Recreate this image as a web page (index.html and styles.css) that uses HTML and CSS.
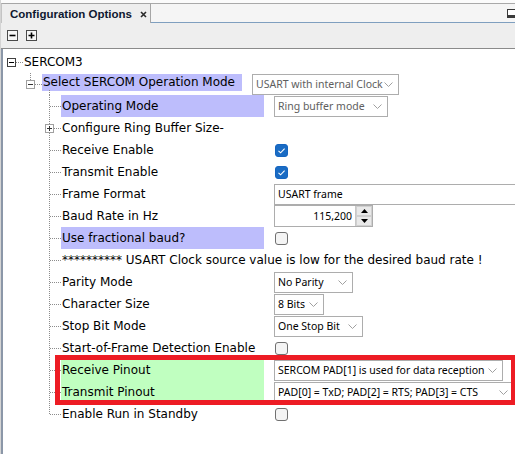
FILE: index.html
```html
<!DOCTYPE html>
<html>
<head>
<meta charset="utf-8">
<link rel="stylesheet" href="styles.css">
</head>
<body>
<div class="panel">
  <div class="tabbar">
    <div class="tab">
      <span class="tab-title">Configuration Options</span>
      <svg class="tab-close" width="7" height="7" viewBox="0 0 7 7"><path d="M1 1L6 6M6 1L1 6" stroke="#2a2a2a" stroke-width="1.6"/></svg>
    </div>
    <div class="tab-fill"><span class="min-btn"></span></div>
  </div>
  <div class="toolbar">
    <span class="tbtn"><svg width="9" height="9" viewBox="0 0 9 9"><path d="M1.5 4.5H7.5" stroke="#000" stroke-width="1.6"/></svg></span>
    <span class="tbtn"><svg width="9" height="9" viewBox="0 0 9 9"><path d="M1.5 4.5H7.5M4.5 1.5V7.5" stroke="#000" stroke-width="1.6"/></svg></span>
  </div>
  <div class="tree">
    <div class="row">
      <span class="gut g0"><span class="hl"></span><span class="exp exp-dark"><svg width="7" height="7" viewBox="0 0 7 7"><path d="M1 3.5H6" stroke="#000" stroke-width="1"/></svg></span></span>
      <span class="lbl">SERCOM3</span>
    </div>
    <div class="row r-sel">
      <span class="gut g1"><span class="vl"></span><span class="hl"></span><span class="exp"><svg width="7" height="7" viewBox="0 0 7 7"><path d="M1 3.5H6" stroke="#333" stroke-width="1"/></svg></span></span>
      <span class="lbl w1 hi-blue short">Select SERCOM Operation Mode</span>
      <span class="combo disabled cw147">USART with internal Clock<svg class="chev" width="9" height="5" viewBox="0 0 9 5"><polyline points="0.5,0.5 4.5,4.5 8.5,0.5" fill="none" stroke="#a0a0a0"/></svg></span>
    </div>
    <div class="row">
      <span class="gut g2"><span class="vl"></span><span class="hl"></span></span>
      <span class="lbl w2 hi-blue">Operating Mode</span>
      <span class="combo disabled cw114">Ring buffer mode<svg class="chev" width="9" height="5" viewBox="0 0 9 5"><polyline points="0.5,0.5 4.5,4.5 8.5,0.5" fill="none" stroke="#a0a0a0"/></svg></span>
    </div>
    <div class="row">
      <span class="gut g2"><span class="vl"></span><span class="hl hl-short"></span><span class="exp exp2"><svg width="7" height="7" viewBox="0 0 7 7"><path d="M1 3.5H6M3.5 1V6" stroke="#333" stroke-width="1"/></svg></span></span>
      <span class="lbl">Configure Ring Buffer Size-</span>
    </div>
    <div class="row">
      <span class="gut g2"><span class="vl"></span><span class="hl"></span></span>
      <span class="lbl w2">Receive Enable</span>
      <span class="chk on"><svg width="13" height="13" viewBox="0 0 13 13"><polyline points="3.5,6.8 5.6,8.8 9.6,4.6" fill="none" stroke="#fff" stroke-width="1.1"/></svg></span>
    </div>
    <div class="row">
      <span class="gut g2"><span class="vl"></span><span class="hl"></span></span>
      <span class="lbl w2">Transmit Enable</span>
      <span class="chk on"><svg width="13" height="13" viewBox="0 0 13 13"><polyline points="3.5,6.8 5.6,8.8 9.6,4.6" fill="none" stroke="#fff" stroke-width="1.1"/></svg></span>
    </div>
    <div class="row">
      <span class="gut g2"><span class="vl"></span><span class="hl"></span></span>
      <span class="lbl w2">Frame Format</span>
      <span class="field">USART frame</span>
    </div>
    <div class="row">
      <span class="gut g2"><span class="vl"></span><span class="hl"></span></span>
      <span class="lbl w2">Baud Rate in Hz</span>
      <span class="spinner"><span class="spin-val">115,200</span><span class="spin-btns"><span class="sbtn"><svg width="7" height="4" viewBox="0 0 7 4"><polygon points="0,4 7,4 3.5,0" fill="#000"/></svg></span><span class="sbtn"><svg width="7" height="4" viewBox="0 0 7 4"><polygon points="0,0 7,0 3.5,4" fill="#000"/></svg></span></span></span>
    </div>
    <div class="row">
      <span class="gut g2"><span class="vl"></span><span class="hl"></span></span>
      <span class="lbl w2 hi-blue">Use fractional baud?</span>
      <span class="chk"></span>
    </div>
    <div class="row">
      <span class="gut g2"><span class="vl"></span><span class="hl"></span></span>
      <span class="lbl">********** USART Clock source value is low for the desired baud rate !</span>
    </div>
    <div class="row">
      <span class="gut g2"><span class="vl"></span><span class="hl"></span></span>
      <span class="lbl w2">Parity Mode</span>
      <span class="combo cw79">No Parity<svg class="chev" width="9" height="5" viewBox="0 0 9 5"><polyline points="0.5,0.5 4.5,4.5 8.5,0.5" fill="none" stroke="#a0a0a0"/></svg></span>
    </div>
    <div class="row">
      <span class="gut g2"><span class="vl"></span><span class="hl"></span></span>
      <span class="lbl w2">Character Size</span>
      <span class="combo cw50">8 Bits<svg class="chev" width="9" height="5" viewBox="0 0 9 5"><polyline points="0.5,0.5 4.5,4.5 8.5,0.5" fill="none" stroke="#a0a0a0"/></svg></span>
    </div>
    <div class="row">
      <span class="gut g2"><span class="vl"></span><span class="hl"></span></span>
      <span class="lbl w2">Stop Bit Mode</span>
      <span class="combo cw89">One Stop Bit<svg class="chev" width="9" height="5" viewBox="0 0 9 5"><polyline points="0.5,0.5 4.5,4.5 8.5,0.5" fill="none" stroke="#a0a0a0"/></svg></span>
    </div>
    <div class="row">
      <span class="gut g2"><span class="vl"></span><span class="hl"></span></span>
      <span class="lbl w2">Start-of-Frame Detection Enable</span>
      <span class="chk"></span>
    </div>
    <div class="row">
      <span class="gut g2"><span class="vl"></span><span class="hl"></span></span>
      <span class="lbl w2 hi-green">Receive Pinout</span>
      <span class="combo cw229">SERCOM PAD[1] is used for data reception<svg class="chev" width="9" height="5" viewBox="0 0 9 5"><polyline points="0.5,0.5 4.5,4.5 8.5,0.5" fill="none" stroke="#a0a0a0"/></svg></span>
    </div>
    <div class="row">
      <span class="gut g2"><span class="vl"></span><span class="hl"></span></span>
      <span class="lbl w2 hi-green">Transmit Pinout</span>
      <span class="combo cw240">PAD[0] = TxD; PAD[2] = RTS; PAD[3] = CTS<svg class="chev" width="9" height="5" viewBox="0 0 9 5"><polyline points="0.5,0.5 4.5,4.5 8.5,0.5" fill="none" stroke="#a0a0a0"/></svg></span>
    </div>
    <div class="row">
      <span class="gut g2"><span class="vl vl-last"></span><span class="hl"></span></span>
      <span class="lbl w2">Enable Run in Standby</span>
      <span class="chk"></span>
    </div>
  </div>
  <div class="annot"></div>
</div>
</body>
</html>
```

FILE: styles.css
```css
* { box-sizing: border-box; }
html, body { margin: 0; padding: 0; background: #fff; }
body {
  width: 515px;
  height: 454px;
  overflow: hidden;
  font-family: "DejaVu Sans", sans-serif;
  font-size: 12px;
  color: #000;
}
.panel {
  position: relative;
  height: 454px;
  width: 515px;
  border-left: 1px solid #d4d4d4;
  display: flex;
  flex-direction: column;
  overflow: hidden;
}

/* tab bar */
.tabbar {
  flex: none;
  height: 23px;
  display: flex;
  align-items: flex-end;
  background: #fbfbfb;
}
.tab {
  flex: none;
  width: 150px;
  height: 20px;
  display: flex;
  align-items: center;
  padding-left: 8px;
  background: #eeeeee;
  border-top: 1px solid #a6a6a6;
  border-right: 1px solid #a6a6a6;
  border-left: 1px solid #c4c4c4;
}
.tab-title {
  font-family: "Liberation Sans", Arial, sans-serif;
  font-weight: bold;
  font-size: 11.5px;
  color: #0e1830;
}
.tab-close { margin-left: 8px; margin-top: 1px; }
.tab-fill {
  flex: 1;
  height: 20px;
  display: flex;
  align-items: center;
  justify-content: flex-end;
  background: #f5f5f5;
  border-top: 1px solid #a9a9a9;
  border-bottom: 1px solid #7f9fbf;
}
.min-btn {
  width: 9px;
  height: 9px;
  margin-right: -1px;
  border: 1px solid #3a3a3a;
  border-bottom: 3px solid #3a3a3a;
  background: #fff;
}

/* toolbar */
.toolbar {
  flex: none;
  height: 26px;
  display: flex;
  align-items: center;
  gap: 8px;
  padding-left: 6px;
  padding-bottom: 1px;
  background: #eeeeee;
  border-bottom: 1px solid #8a8a8a;
}
.tbtn {
  width: 11px;
  height: 11px;
  border: 1px solid #4a4a4a;
  background: #f6f6f6;
  display: flex;
  align-items: center;
  justify-content: center;
}
.tbtn svg { display: block; }

/* tree */
.tree {
  flex: 1;
  background: #fff;
  border-left: 2px solid #8b97a8;
  padding-top: 2px;
}
.row {
  position: relative;
  display: flex;
  align-items: center;
  height: 22px;
  white-space: nowrap;
}
.gut {
  position: relative;
  flex: none;
  align-self: stretch;
}
.g0 { width: 20px; }
.g1 { width: 39px; }
.g2 { width: 58px; }

.vl, .hl {
  position: absolute;
  display: block;
}
.vl {
  width: 1px;
  top: 0;
  bottom: 0;
  background: repeating-linear-gradient(to bottom, #8c8c8c 0 1px, transparent 1px 2px);
}
.hl {
  height: 1px;
  top: 11px;
  background: repeating-linear-gradient(to right, #8c8c8c 0 1px, transparent 1px 2px);
}
.g0 .hl { left: 13px; width: 7px; }
.g1 .vl { left: 27px; bottom: auto; height: 7px; }
.g1 .hl { left: 32px; width: 7px; }
.g2 .vl { left: 46px; }
.g2 .vl-last { bottom: auto; height: 12px; }
.g2 .hl { left: 47px; width: 11px; }
.g2 .hl-short { left: 51px; width: 7px; }

.exp {
  position: absolute;
  top: 7px;
  width: 9px;
  height: 9px;
  border: 1px solid #a0a0a0;
  background: #fff;
  display: flex;
  align-items: center;
  justify-content: center;
}
.exp svg { display: block; }
.exp-dark { left: 4px; border-color: #404040; }
.g1 .exp { left: 23px; }
.exp2 { left: 42px; }

.r-sel::after {
  content: "";
  position: absolute;
  left: 46px;
  top: 17px;
  width: 1px;
  height: 5px;
  background: repeating-linear-gradient(to bottom, #8c8c8c 0 1px, transparent 1px 2px);
}

.lbl {
  flex: none;
  padding-left: 1px;
  height: 22px;
  line-height: 22px;
}
.w1 { width: 200px; margin-right: 10px; }
.w2 { width: 203px; margin-right: 10px; }
.hi-blue { background: #bdbdfc; }
.hi-green { background: #c0ffc0; }
.short { height: 17px; line-height: 17px; align-self: flex-start; margin-top: 1px; }

/* value widgets */
.combo, .field, .spinner {
  font-family: "Noto Sans", "Liberation Sans", sans-serif;
  font-size: 10.5px;
}
.combo {
  flex: none;
  height: 21px;
  display: flex;
  align-items: center;
  justify-content: space-between;
  padding: 0 5px 0 3px;
  border: 1px solid #adadad;
  background: #fff;
  color: #000;
}
.combo.disabled { color: #5e5e5e; }
.chev { display: block; flex: none; }
.cw147 { width: 147px; }
.cw114 { width: 114px; }
.cw79 { width: 79px; }
.cw50 { width: 50px; }
.cw89 { width: 89px; }
.cw229 { width: 229px; }
.cw240 { width: 240px; }

.chk {
  flex: none;
  width: 13px;
  height: 13px;
  border: 1px solid #707070;
  border-radius: 3px;
  background: #f4f4f4;
  margin-left: 1px;
}
.chk.on {
  border-color: #1565c0;
  background: #1a6cc4;
}
.chk svg { display: block; margin: -1px; }

.field {
  flex: none;
  width: 260px;
  height: 21px;
  display: flex;
  align-items: center;
  padding-left: 3px;
  border: 1px solid #adadad;
  background: #fff;
}
.spinner {
  flex: none;
  width: 99px;
  height: 22px;
  display: flex;
  border: 1px solid #adadad;
  background: #fff;
}
.spin-val {
  flex: 1;
  display: flex;
  align-items: center;
  justify-content: flex-end;
  padding-right: 3px;
}
.spin-btns {
  flex: none;
  width: 17px;
  display: flex;
  flex-direction: column;
  border-left: 1px solid #c8c8c8;
}
.sbtn {
  flex: 1;
  display: flex;
  align-items: center;
  justify-content: center;
  background: #e9e9e9;
  border: 1px solid #d0d0d0;
}
.sbtn svg { display: block; }

/* annotation overlay */
.annot {
  position: absolute;
  left: 54px;
  top: 355px;
  width: 461px;
  height: 50px;
  border: 5px solid #ed1c24;
  pointer-events: none;
}
```
